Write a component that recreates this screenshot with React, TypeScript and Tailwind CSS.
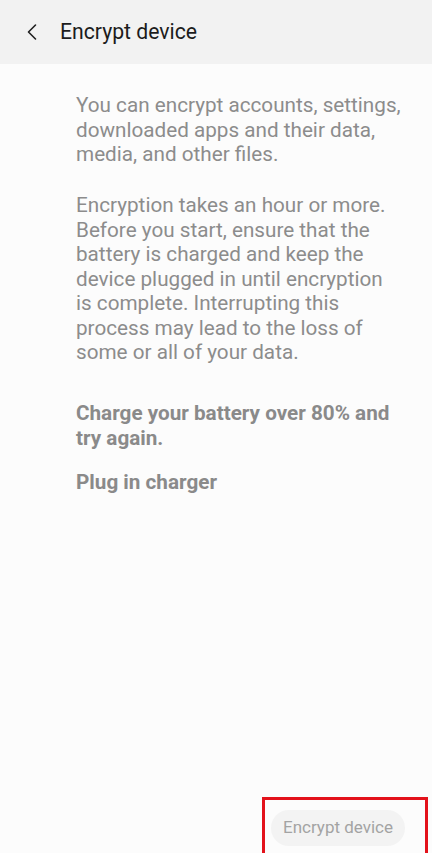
import { ChevronLeft } from "lucide-react";

export default function App() {
  return (
    <div
      className="flex h-[853px] w-[432px] flex-col overflow-hidden bg-[#fcfcfc]"
      style={{ fontFamily: "Roboto, 'Noto Sans', sans-serif" }}
    >
      <header className="flex h-[64px] shrink-0 items-center bg-[#f2f2f2] pl-[18px]">
        <ChevronLeft className="h-[28px] w-[28px] text-[#222]" strokeWidth={1.4} />
        <h1 className="ml-[14px] text-[21.2px] text-[#1c1c1c]">Encrypt device</h1>
      </header>

      <main className="flex-1 pl-[76px] pr-[10px] pt-[29px] text-[20.7px] leading-[24.5px] text-[#8c8c8c]">
        <p>
          You can encrypt accounts, settings,
          <br />
          downloaded apps and their data,
          <br />
          media, and other files.
        </p>
        <p className="mt-[26.5px]">
          Encryption takes an hour or more.
          <br />
          Before you start, ensure that the
          <br />
          battery is charged and keep the
          <br />
          device plugged in until encryption
          <br />
          is complete. Interrupting this
          <br />
          process may lead to the loss of
          <br />
          some or all of your data.
        </p>
        <p className="mt-[36.5px] font-bold text-[#8a8a8a]">
          Charge your battery over 80% and
          <br />
          try again.
        </p>
        <p className="mt-[20px] font-bold text-[#8a8a8a]">Plug in charger</p>
      </main>

      <footer className="flex shrink-0 justify-end">
        <div className="mr-[4px] h-[56px] w-[166px] border-[3px] border-b-0 border-[#e3121b] pl-[6px] pt-[10px]">
          <div className="flex h-[36px] w-[134px] items-center justify-center rounded-full bg-[#f3f3f3] text-[17px] text-[#a3a3a3]">
            Encrypt device
          </div>
        </div>
      </footer>
    </div>
  );
}
